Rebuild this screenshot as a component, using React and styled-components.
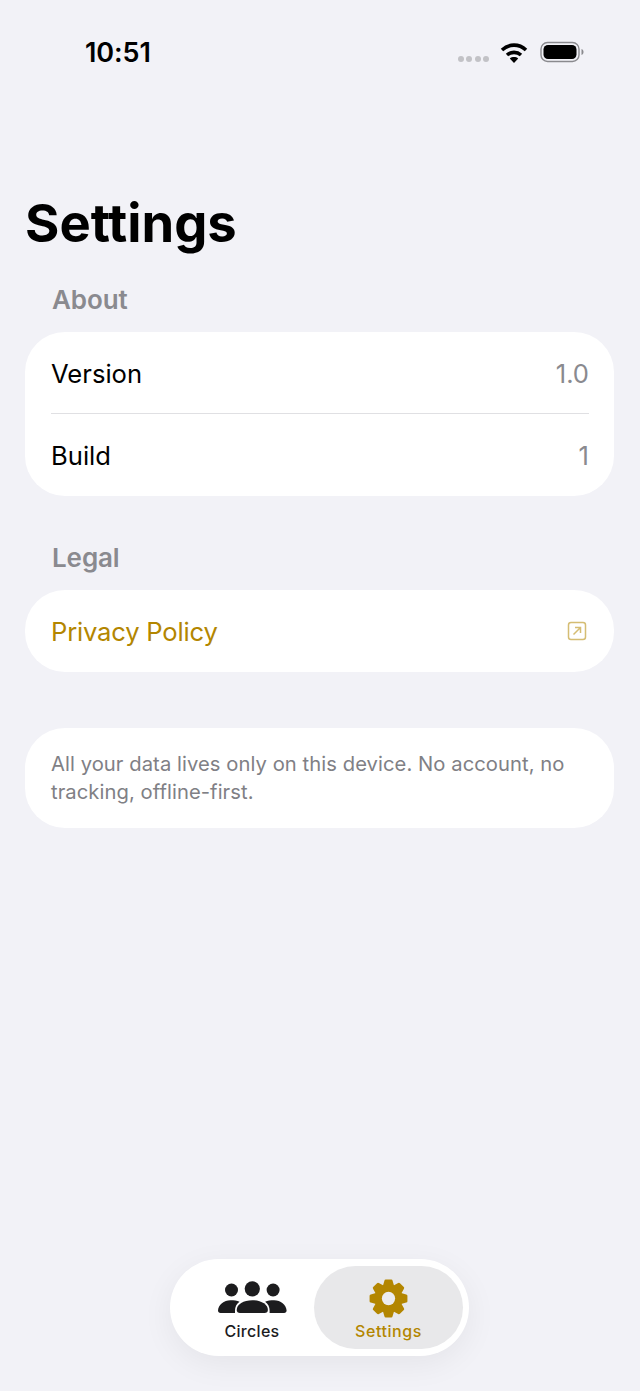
import React from 'react';
import styled, { createGlobalStyle } from 'styled-components';

const Global = createGlobalStyle`
  html, body { margin: 0; padding: 0; background: #f2f2f7; }
  body { font-family: Inter, "Liberation Sans", sans-serif; }
`;

const Screen = styled.div`
  position: relative;
  width: 640px;
  height: 1391px;
  overflow: hidden;
  background: #f2f2f7;
`;

const StatusBar = styled.div`
  height: 104px;
  box-sizing: border-box;
  padding: 36px 56px 0 85px;
  display: flex;
  justify-content: space-between;
  align-items: flex-start;
`;

const Time = styled.div`
  font-size: 27px;
  line-height: 34px;
  font-weight: 600;
  letter-spacing: -0.1px;
  color: #000;
`;

const StatusIcons = styled.div`
  display: flex;
  align-items: center;
  padding-top: 5px;
`;

const Dots = styled.div`
  display: flex;
  gap: 2.5px;
  margin: 13px 11px 0 1px;
`;

const Dot = styled.span`
  width: 6px;
  height: 6px;
  border-radius: 50%;
  background: #c2c2c6;
`;

const Title = styled.h1`
  margin: 85px 0 27px 25px;
  font-size: 52.5px;
  line-height: 68px;
  font-weight: 700;
  color: #000;
`;

const SectionLabel = styled.div`
  margin: 0 0 16px 52px;
  font-size: 26px;
  line-height: 32px;
  font-weight: 600;
  letter-spacing: -0.1px;
  color: #8a8a8f;
`;

const Card = styled.div`
  margin: 0 26px ${p => p.$after || 0}px 25px;
  background: #fff;
  border-radius: 40px;
`;

const Row = styled.div`
  height: 82px;
  margin: 0 25px 0 26px;
  display: flex;
  align-items: center;
  justify-content: space-between;
  font-size: 25.6px;
  letter-spacing: ${p => p.$accent ? '-0.2px' : '0'};
  color: ${p => p.$accent ? '#b38600' : '#000'};
  & + & { box-shadow: 0 -1px 0 #e0e0e3; }
`;

const Value = styled.span`
  color: #8a8a8f;
`;

const Note = styled.div`
  padding: 21.5px 26px;
  font-size: 20.2px;
  line-height: 28.5px;
  letter-spacing: 0.07px;
  color: #808085;
`;

const TabBar = styled.div`
  position: absolute;
  left: 170px;
  top: 1259px;
  width: 299px;
  height: 97px;
  box-sizing: border-box;
  padding: 7px 6px;
  display: flex;
  align-items: stretch;
  background: #fff;
  border-radius: 49px;
  box-shadow: 0 8px 32px rgba(0, 0, 0, 0.06);
`;

const Tab = styled.div`
  flex: ${p => p.$active ? '0 0 149px' : '1'};
  display: flex;
  flex-direction: column;
  align-items: center;
  padding: 12px 0 0 ${p => p.$active ? 0 : 14}px;
  box-sizing: border-box;
  border-radius: 42px;
  background: ${p => p.$active ? '#e8e8ea' : 'transparent'};
  color: ${p => p.$active ? '#b38600' : '#1c1c1e'};
`;

const TabIcon = styled.div`
  height: 40px;
  display: flex;
  align-items: center;
  justify-content: center;
`;

const TabLabel = styled.div`
  margin-top: 3px;
  font-size: 16px;
  line-height: 20px;
  font-weight: 500;
  letter-spacing: ${p => p.$wide ? 0.55 : 0.3}px;
`;

const Wifi = () => (
  <svg width="28" height="21" viewBox="0 0 28 21" fill="none" stroke="#000" strokeWidth="3.6">
    <path d="M2 8 C9 1.5 19 1.5 26 8" />
    <path d="M7 13 C11 9.5 17 9.5 21 13" />
    <path d="M14 21 L9.8 16.4 C12 14.6 16 14.6 18.2 16.4 Z" fill="#000" stroke="none" />
  </svg>
);

const Battery = () => (
  <svg width="44" height="22" viewBox="0 0 44 22" style={{ marginLeft: 12 }}>
    <rect x="1" y="1.5" width="38" height="19" rx="6.5" fill="none" stroke="#8a8a8e" strokeWidth="1.4" />
    <rect x="3.5" y="4" width="33" height="14" rx="4.5" fill="#000" />
    <path d="M41.5 8 C43 8.5 43.5 9.8 43.5 11 C43.5 12.2 43 13.5 41.5 14 Z" fill="#8a8a8e" />
  </svg>
);

const ExternalIcon = () => (
  <svg width="20" height="20" viewBox="0 0 20 20" fill="none" stroke="#b38600" strokeOpacity="0.55" strokeWidth="1.5" style={{ marginRight: 2 }}>
    <rect x="1.5" y="1.5" width="17" height="17" rx="2.5" />
    <path d="M6.5 13.5 L13.5 6.5 M8 6.5 H13.5 V12" />
  </svg>
);

const sideBody = 'M2.5 32 C1 32 0 31 0 29.5 C0.3 24 6 19.3 12.5 19.3 C16 19.3 19 19.6 21.5 20.8 C18.5 23 17 26 17 29.5 L17 32 Z';

const PeopleIcon = () => (
  <svg width="69" height="34" viewBox="0 0 69 34" fill="#1c1c1e">
    <circle cx="13.5" cy="9" r="6.5" />
    <circle cx="34.3" cy="7.8" r="7.6" />
    <circle cx="55.1" cy="9" r="6.5" />
    <path d={sideBody} />
    <path d={sideBody} transform="matrix(-1 0 0 1 68.6 0)" />
    <path d="M22 32 C20 32 18.7 31 18.7 29 C18.7 23.5 25.5 19.3 34.3 19.3 C43.1 19.3 49.9 23.5 49.9 29 C49.9 31 48.6 32 46.6 32 Z" />
  </svg>
);

const gearTeeth = [0, 45, 90, 135, 180, 225, 270, 315];

const GearIcon = () => (
  <svg width="39" height="39" viewBox="0 0 40 40">
    {gearTeeth.map(a => (
      <path key={a} d="M14 8 L15.8 1.8 Q16 0.6 17.2 0.6 H22.8 Q24 0.6 24.2 1.8 L26 8 Z" fill="#b38600" transform={`rotate(${a} 20 20)`} />
    ))}
    <circle cx="20" cy="20" r="14" fill="#b38600" />
    <circle cx="20" cy="20" r="6.8" fill="#ececee" />
  </svg>
);

export default function App() {
  return (
    <Screen>
      <Global />
      <StatusBar>
        <Time>10:51</Time>
        <StatusIcons>
          <Dots><Dot /><Dot /><Dot /><Dot /></Dots>
          <Wifi />
          <Battery />
        </StatusIcons>
      </StatusBar>
      <Title>Settings</Title>
      <SectionLabel>About</SectionLabel>
      <Card $after={46}>
        <Row>Version<Value>1.0</Value></Row>
        <Row>Build<Value>1</Value></Row>
      </Card>
      <SectionLabel>Legal</SectionLabel>
      <Card $after={56}>
        <Row $accent>Privacy Policy<ExternalIcon /></Row>
      </Card>
      <Card>
        <Note>All your data lives only on this device. No account, no tracking, offline-first.</Note>
      </Card>
      <TabBar>
        <Tab>
          <TabIcon><PeopleIcon /></TabIcon>
          <TabLabel>Circles</TabLabel>
        </Tab>
        <Tab $active>
          <TabIcon><GearIcon /></TabIcon>
          <TabLabel $wide>Settings</TabLabel>
        </Tab>
      </TabBar>
    </Screen>
  );
}
